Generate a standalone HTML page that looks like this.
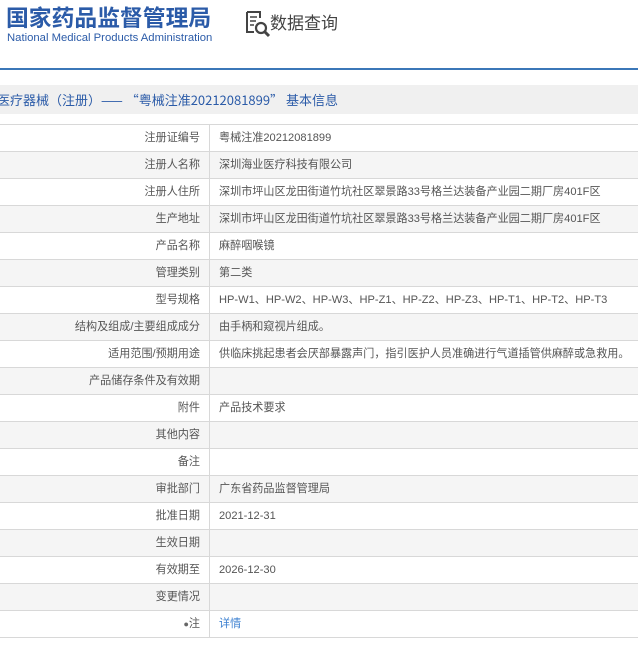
<!DOCTYPE html>
<html><head><meta charset="utf-8"><style>
*{margin:0;padding:0;box-sizing:border-box}
body{width:638px;height:645px;overflow:hidden;background:#fff;font-family:"Liberation Sans","Noto Sans CJK SC",sans-serif;position:relative}
.t1{position:absolute;left:6px;top:3px;font-size:22.8px;font-weight:bold;color:#2b5ba8;white-space:nowrap;font-family:"Noto Sans CJK SC",sans-serif;line-height:28px}
.t2{position:absolute;left:7px;top:32px;font-size:11.3px;color:#2b5ba8;white-space:nowrap}
.q{position:absolute;left:270px;top:10px;font-size:17px;color:#444;font-family:"Noto Sans CJK SC",sans-serif;line-height:24px}
.ic{position:absolute;left:245px;top:11px}
.bl{position:absolute;left:0;top:68px;width:638px;height:2px;background:#3b77b8}
.hd{position:absolute;left:0;top:85px;width:638px;height:29px;background:#f0f0f0;color:#2b5ba8;font-size:13px;line-height:29px;white-space:nowrap;text-indent:-3px;font-family:"Noto Sans CJK SC",sans-serif}
table{position:absolute;left:-1px;top:124px;width:640px;border-collapse:collapse;table-layout:fixed;font-size:11.1px;color:#555;font-family:"Liberation Sans","Noto Sans CJK SC",sans-serif}
td{height:27px;border:1px solid #d8d8d8;padding:0;white-space:nowrap;overflow:hidden;line-height:25px}
td.l{text-align:right;padding-right:9px}
td.v{padding-left:9px}
tr:nth-child(even){background:#f5f5f5}
a{color:#3a7fd0;text-decoration:none}
</style></head><body>
<div class="t1">国家药品监督管理局</div>
<div class="t2">National Medical Products Administration</div>
<svg class="ic" width="26" height="28" viewBox="0 0 26 28"><path d="M2 1h13v6M2 1v20h7" fill="none" stroke="#444" stroke-width="2"/><path d="M5 6h7M5 10h6M5 14h4" stroke="#444" stroke-width="1.6"/><circle cx="16" cy="17" r="5" fill="none" stroke="#444" stroke-width="2.2"/><path d="M19.5 20.5l4.5 4.5" stroke="#444" stroke-width="3"/></svg>
<div class="q">数据查询</div>
<div class="bl"></div>
<div class="hd">医疗器械（注册）—— “粤械注准20212081899” 基本信息</div>
<table>
<colgroup><col style="width:210px"><col></colgroup>
<tr><td class="l">注册证编号</td><td class="v">粤械注准20212081899</td></tr>
<tr><td class="l">注册人名称</td><td class="v">深圳海业医疗科技有限公司</td></tr>
<tr><td class="l">注册人住所</td><td class="v">深圳市坪山区龙田街道竹坑社区翠景路33号格兰达装备产业园二期厂房401F区</td></tr>
<tr><td class="l">生产地址</td><td class="v">深圳市坪山区龙田街道竹坑社区翠景路33号格兰达装备产业园二期厂房401F区</td></tr>
<tr><td class="l">产品名称</td><td class="v">麻醉咽喉镜</td></tr>
<tr><td class="l">管理类别</td><td class="v">第二类</td></tr>
<tr><td class="l">型号规格</td><td class="v">HP-W1、HP-W2、HP-W3、HP-Z1、HP-Z2、HP-Z3、HP-T1、HP-T2、HP-T3</td></tr>
<tr><td class="l">结构及组成/主要组成成分</td><td class="v">由手柄和窥视片组成。</td></tr>
<tr><td class="l">适用范围/预期用途</td><td class="v">供临床挑起患者会厌部暴露声门，指引医护人员准确进行气道插管供麻醉或急救用。</td></tr>
<tr><td class="l">产品储存条件及有效期</td><td class="v"></td></tr>
<tr><td class="l">附件</td><td class="v">产品技术要求</td></tr>
<tr><td class="l">其他内容</td><td class="v"></td></tr>
<tr><td class="l">备注</td><td class="v"></td></tr>
<tr><td class="l">审批部门</td><td class="v">广东省药品监督管理局</td></tr>
<tr><td class="l">批准日期</td><td class="v">2021-12-31</td></tr>
<tr><td class="l">生效日期</td><td class="v"></td></tr>
<tr><td class="l">有效期至</td><td class="v">2026-12-30</td></tr>
<tr><td class="l">变更情况</td><td class="v"></td></tr>
<tr><td class="l"><span style="color:#666;font-size:9px">●</span>注</td><td class="v"><a>详情</a></td></tr>
</table>
</body></html>
